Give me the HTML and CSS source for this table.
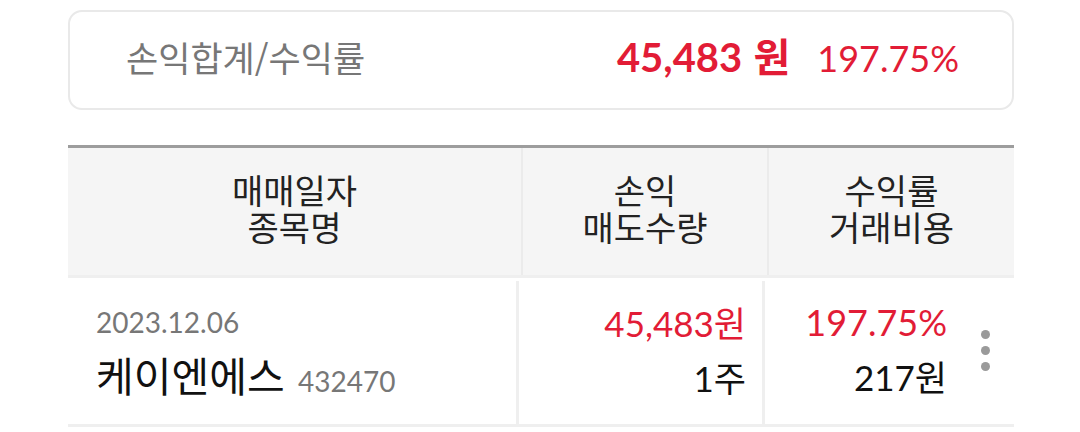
FILE: index.html
```html
<!DOCTYPE html>
<html lang="ko">
<head>
<meta charset="utf-8">
<link rel="stylesheet" href="styles.css">
</head>
<body>
<div class="page">
  <section class="summary">
    <span class="summary-label">손익합계/수익률</span>
    <div class="summary-values">
      <span class="summary-amount"><span class="num">45,483</span> 원</span>
      <span class="summary-rate">197.75%</span>
    </div>
  </section>

  <section class="table">
    <div class="thead">
      <div class="th th-first"><span>매매일자</span><span>종목명</span></div>
      <div class="th"><span>손익</span><span>매도수량</span></div>
      <div class="th"><span>수익률</span><span>거래비용</span></div>
    </div>
    <div class="row">
      <div class="td td-first">
        <div class="date">2023.12.06</div>
        <div class="name">케이엔에스 <span class="code">432470</span></div>
      </div>
      <div class="td td-num">
        <div class="red"><span class="num">45,483</span>원</div>
        <div class="dark"><span class="num">1</span>주</div>
      </div>
      <div class="td td-num td-last">
        <div class="vals">
          <div class="red num">197.75%</div>
          <div class="dark"><span class="num">217</span>원</div>
        </div>
        <div class="more" aria-label="more">
          <span></span><span></span><span></span>
        </div>
      </div>
    </div>
  </section>
</div>
</body>
</html>
```

FILE: styles.css
```css
* { box-sizing: border-box; }
html, body { margin: 0; padding: 0; background: #fff; }
body {
  font-family: "Noto Sans CJK KR", "Noto Sans", sans-serif;
  color: #222;
  width: 1080px;
  height: 432px;
  overflow: hidden;
}
.page {
  padding: 10px 66px 0 68px;
}
.num { font-family: Lato, "Noto Sans CJK KR", sans-serif; }

.summary {
  height: 100px;
  border: 2px solid #e9e9e9;
  border-radius: 14px;
  display: flex;
  align-items: center;
  justify-content: space-between;
  padding: 0 53px 8px 56px;
}
.summary-label {
  font-size: 35px;
  color: #777;
  line-height: 1;
}
.summary-values {
  display: flex;
  align-items: baseline;
  gap: 27px;
  color: #e21c36;
}
.summary-amount {
  font-size: 40px;
  font-weight: 700;
  line-height: 1;
}
.summary-rate {
  font-family: Lato, sans-serif;
  font-size: 36px;
  line-height: 1;
}

.table {
  margin-top: 35px;
  border-top: 3px solid #9d9d9d;
}
.thead {
  display: grid;
  grid-template-columns: 453px 246px 247px;
  background: #f5f5f5;
  border-bottom: 3px solid #efefef;
  height: 130px;
}
.th {
  display: flex;
  flex-direction: column;
  align-items: center;
  justify-content: center;
  text-align: center;
  font-size: 34px;
  color: #222;
  border-left: 2px solid #ebebeb;
  padding-bottom: 6px;
}
.th span {
  display: block;
  line-height: 36px;
  height: 37px;
}
.th-first { border-left: 0; }

.row {
  display: grid;
  grid-template-columns: 451px 246px 249px;
  height: 149px;
  border-bottom: 3px solid #efefef;
}
.td {
  display: flex;
  flex-direction: column;
  justify-content: center;
  margin-top: 3px;
}
.td-first {
  padding-left: 28px;
  padding-top: 8px;
  border-right: 3px solid #efefef;
}
.date {
  font-family: Lato, sans-serif;
  font-size: 28px;
  color: #777;
  line-height: 36px;
}
.name {
  font-size: 41px;
  color: #111;
  line-height: 56px;
  margin-top: 6px;
}
.code {
  font-family: Lato, sans-serif;
  font-size: 28px;
  color: #777;
  margin-left: 2px;
}
.td-num {
  align-items: flex-end;
  padding-right: 16px;
  font-size: 35px;
  line-height: 54px;
  border-right: 3px solid #efefef;
  padding-bottom: 6px;
}
.td-last {
  border-right: 0;
  flex-direction: row;
  align-items: center;
  justify-content: flex-end;
  padding-right: 24px;
}
.vals {
  display: flex;
  flex-direction: column;
  align-items: flex-end;
}
.vals .red { font-size: 36px; }
.red { color: #e21c36; }
.dark { color: #111; }
.more {
  display: flex;
  flex-direction: column;
  gap: 7px;
  margin-left: 34px;
  margin-top: 2px;
}
.more span {
  width: 9px;
  height: 9px;
  border-radius: 50%;
  background: #9a9a9a;
}
```
